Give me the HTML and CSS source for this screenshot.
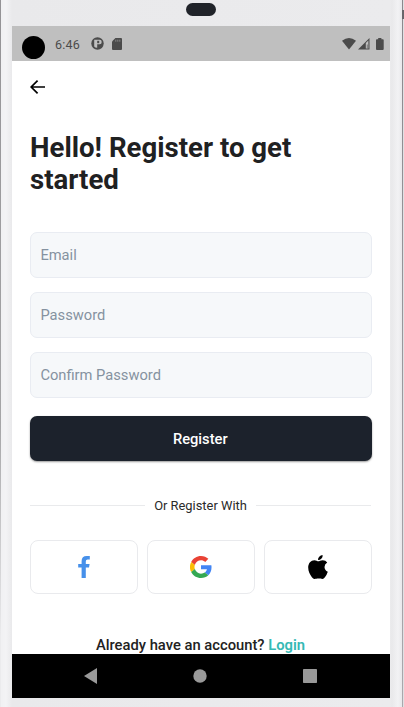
FILE: index.html
```html
<!DOCTYPE html>
<html lang="en">
<head>
<meta charset="utf-8">
<title>Register</title>
<link rel="stylesheet" href="styles.css">
</head>
<body>
<div class="phone">
  <div class="speaker"></div>
  <div class="screen">
    <header class="status">
      <span class="camera"></span>
      <span class="time">6:46</span>
      <svg class="privacy" width="13" height="13" viewBox="0 0 13 13"><circle cx="6.5" cy="6.5" r="6.2" fill="#4b4b4b"/><path d="M3.200 2.800H8.700Q10.700 2.800 10.700 5T8.700 7.200H6.200V10.800Q4.300 10.900 3.200 9.500Z" fill="#bfbfbf"/><path d="M6.200 3.800H8.200V6.200H6.200Z" fill="#4b4b4b"/></svg>
      <svg class="sd" width="10" height="12" viewBox="0 0 10 12"><path d="M3.400 0H9q1 0 1 1v10q0 1-1 1H1q-1 0-1-1V3.500Z" fill="#4b4b4b"/><path d="M3.800 1.700v2M5.800 1.700v2M7.800 1.700v2" stroke="#8c8c8c" stroke-width=".9"/></svg>
      <div class="signals">
        <svg width="14" height="12" viewBox="0 0 14 12"><path d="M0 2.800Q7-2.600 14 2.800L7 11.600Z" fill="#4b4b4b"/></svg>
        <svg class="cell" width="12" height="12" viewBox="0 0 12 12"><path d="M0 11.500L11.500 0V11.500Z" fill="#4b4b4b"/><path d="M7.800 5L10.400 2.500V10.500H7.800Z" fill="#bfbfbf"/><path d="M9.300 6.500v4" stroke="#4b4b4b" stroke-width=".6"/></svg>
        <svg class="battery" width="8" height="12" viewBox="0 0 8 12"><path d="M2.200 0h3.200v1.200H6.800q.9 0 .9.900v9q0 .9-.9.900H.9Q0 12 0 11.100V2.100q0-.9.900-.9H2.200Z" fill="#4b4b4b"/></svg>
      </div>
    </header>
    <main class="content">
      <svg class="back" width="16" height="14" viewBox="0 0 16 14"><path d="M7.600 .6L1.200 7L7.600 13.400M1.200 7H15" fill="none" stroke="#000" stroke-width="1.700"/></svg>
      <h1>Hello! Register to get<br>started</h1>
      <form class="fields">
        <div class="field"><span>Email</span></div>
        <div class="field"><span>Password</span></div>
        <div class="field"><span>Confirm Password</span></div>
        <button class="submit" type="button">Register</button>
      </form>
      <div class="divider"><span>Or Register With</span></div>
      <div class="social">
        <div class="provider">
          <svg width="12" height="22" viewBox="0 0 12 22"><path d="M11.800 .1V3.500H9.600Q7.800 3.500 7.800 5.500V8H11.600L11 11.500H7.800V22H3.600V11.500H.2V8H3.600V5.200Q3.600 0 8.700 0Q10.500 0 11.800 .1Z" fill="#4690ea"/></svg>
        </div>
        <div class="provider">
          <svg width="22" height="22" viewBox="0 0 48 48"><path fill="#e94235" d="M24 9.500c3.540 0 6.710 1.220 9.210 3.600l6.850-6.850C35.900 2.380 30.470 0 24 0 14.620 0 6.510 5.380 2.560 13.220l7.980 6.190C12.430 13.720 17.740 9.500 24 9.500z"/><path fill="#4285f4" d="M46.980 24.550c0-1.570-.15-3.090-.38-4.550H24v9.020h12.940c-.58 2.960-2.260 5.480-4.780 7.180l7.730 6c4.510-4.180 7.090-10.360 7.090-17.650z"/><path fill="#fbbc05" d="M10.530 28.590A14.500 14.500 0 0 1 10.530 19.410l-7.980-6.190A24 24 0 0 0 2.560 34.780z"/><path fill="#34a853" d="M24 48c6.480 0 11.930-2.130 15.890-5.810l-7.730-6c-2.150 1.450-4.920 2.300-8.160 2.300-6.260 0-11.570-4.220-13.470-9.910l-7.980 6.190C6.510 42.620 14.620 48 24 48z"/></svg>
        </div>
        <div class="provider">
          <svg width="20" height="24" viewBox="0 0 20 24"><path d="M14.600 0Q14.900 2 13.500 3.600Q12 5.200 10 5.100Q9.900 3.200 11.200 1.800Q12.700 .2 14.600 0ZM10.300 6.300C11.300 6.300 12.500 5.200 14.700 5.200Q17.700 5.200 19.200 7.600Q16.500 9.300 16.500 12Q16.600 15.400 19.800 16.700Q18.900 19.700 16.900 22.200Q15.800 23.900 14.400 23.900C13 23.900 12.400 23.500 10.500 23.500C8.600 23.500 8 23.900 6.600 23.900Q5.200 24 3.900 22.300C1.900 19.700 .2 16.200 .2 12.600C.2 8.200 3 5.200 6.300 5.200C8.200 5.200 9.300 6.300 10.300 6.300Z"/></svg>
        </div>
      </div>
      <p class="login">Already have an account? <a>Login</a></p>
    </main>
    <nav class="nav">
      <svg width="13" height="16" viewBox="0 0 13 16"><path d="M0 8L13 0V16Z" fill="#999"/></svg>
      <svg width="14" height="14" viewBox="0 0 14 14"><circle cx="7" cy="7" r="6.700" fill="#999"/></svg>
      <svg width="14" height="14" viewBox="0 0 14 14"><rect width="14" height="14" rx=".7" fill="#999"/></svg>
    </nav>
  </div>
</div>
</body>
</html>
```
FILE: styles.css
```css
* { box-sizing: border-box; }
body { margin: 0; font-family: Roboto, sans-serif; }
svg { display: block; flex: none; }
.phone {
  width: 404px; height: 707px; overflow: hidden;
  display: flex; flex-direction: column;
  padding: 3px 14px 9px 12px;
  background:
    linear-gradient(#949396, #a5a5a7 60%, #ebebed 90%) 0 0 / 1px 100% no-repeat,
    linear-gradient(#68666b, #68666b) 402px 10px / 2px 9px no-repeat,
    linear-gradient(#8b888d, #aaa8ad) 402px 0 / 1px 100% no-repeat,
    linear-gradient(90deg, #f0f0f2 0, #f3f3f5 6px, #e9e9eb 12px, #ebebed 390px, #e9e9eb 392px, #f2f2f4 398px, #e8e8eb 402px, #dddde0 404px);
}
.speaker { width: 30px; height: 13px; border-radius: 7px; background: #202329; margin: 0 0 10px 174px; flex: none; }
.screen { height: 672px; display: flex; flex-direction: column; background: #fff; }
.status { height: 35px; flex: none; background: #bfbfbf; display: flex; align-items: center; padding: 0 7px 0 10px; }
.camera { width: 23px; height: 23px; border-radius: 50%; background: #000; margin-top: 8px; }
.time { font-size: 12.5px; letter-spacing: .25px; color: #4b4b4b; margin: 1px 0 0 10px; width: 36px; }
.privacy { margin-left: -.5px; }
.sd { margin-left: 8.5px; }
.signals { margin-left: auto; display: flex; align-items: center; margin-right: -.5px; }
.cell { margin-left: 2px; }
.battery { margin-left: 6px; }
.content { height: 593px; flex: none; overflow: hidden; padding: 19px 18px 0; display: flex; flex-direction: column; }
.back { flex: none; }
h1 { margin: 38px 0 0; font-size: 27.6px; line-height: 32px; font-weight: 700; color: #1f2122; white-space: nowrap; }
.fields { margin-top: 36px; display: flex; flex-direction: column; gap: 14px; width: 341.5px; }
.field { height: 46px; border: 1px solid #e9ecf2; border-radius: 7px; background: #f6f8fa; padding-left: 9.4px; display: flex; align-items: center; font-size: 14.7px; color: #8592a0; }
.submit { height: 45px; margin-top: 4px; border: 0; border-radius: 7px; background: #1c222c; color: #fff; font: 500 14.7px/17px Roboto, sans-serif; padding: 1px 1px 0 0; box-shadow: 0 1px 2px #0006; }
.divider { height: 16px; margin-top: 37px; display: flex; align-items: center; gap: 9px; width: 341px; font-size: 12.9px; color: #2a2a2a; white-space: nowrap; }
.divider::before, .divider::after { content: ""; flex: 1; height: 1px; background: #e9eaec; }
.social { margin-top: 27px; display: grid; grid-template-columns: repeat(3, 1fr); gap: 9px; width: 341.5px; }
.provider { height: 54px; border: 1px solid #e9eaed; border-radius: 8px; display: flex; align-items: center; justify-content: center; }
.login { margin: 42px 0 0; width: 341px; text-align: center; font-size: 14.75px; line-height: 18px; font-weight: 500; color: #222; white-space: nowrap; }
.login a { color: #35b9b5; font-weight: 600; }
.nav { height: 44px; flex: none; background: #000; display: flex; align-items: center; padding: 0 73px 0 72px; justify-content: space-between; }
```
